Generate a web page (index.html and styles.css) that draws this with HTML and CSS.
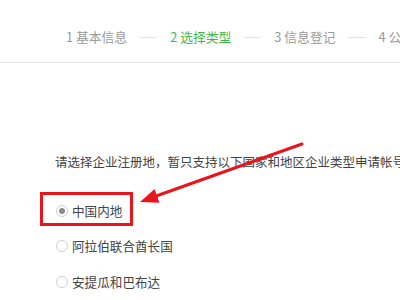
FILE: index.html
```html
<!DOCTYPE html>
<html lang="zh">
<head>
<meta charset="utf-8">
<link rel="stylesheet" href="styles.css">
</head>
<body>
<div class="page">
  <header class="header">
    <div class="steps">
      <span class="step">1 基本信息</span>
      <span class="dash"></span>
      <span class="step active">2 选择类型</span>
      <span class="dash"></span>
      <span class="step">3 信息登记</span>
      <span class="dash"></span>
      <span class="step">4 公众号信息</span>
    </div>
  </header>
  <main class="main">
    <p class="tip">请选择企业注册地，暂只支持以下国家和地区企业类型申请帐号</p>
    <ul class="options">
      <li class="option"><span class="radio checked"></span><span class="label">中国内地</span></li>
      <li class="option"><span class="radio"></span><span class="label">阿拉伯联合酋长国</span></li>
      <li class="option"><span class="radio"></span><span class="label">安提瓜和巴布达</span></li>
    </ul>
  </main>
  <div class="highlight"></div>
  <svg class="arrow" width="400" height="300" viewBox="0 0 400 300">
    <line x1="302" y1="144" x2="152" y2="197.5" stroke="#e8161c" stroke-width="3" stroke-linecap="round"/>
    <polygon points="140,202 159.4,202.8 154.6,189" fill="#e8161c"/>
  </svg>
</div>
</body>
</html>
```

FILE: styles.css
```css
html, body {
  margin: 0;
  padding: 0;
  background: #fff;
}
body {
  font-family: "Noto Sans CJK SC", "Microsoft YaHei", sans-serif;
  width: 400px;
  height: 300px;
  overflow: hidden;
}
.page {
  position: relative;
  width: 400px;
  height: 300px;
  overflow: hidden;
}
.header {
  height: 50px;
  padding-top: 12px;
  border-bottom: 1px solid #e6e6e6;
  box-sizing: content-box;
}
.steps {
  height: 50px;
  display: flex;
  align-items: center;
  padding-left: 66px;
  white-space: nowrap;
}
.step {
  font-size: 12.8px;
  color: #9a9a9a;
  line-height: 20px;
  flex: none;
}
.step.active {
  color: #44b549;
}
.dash {
  flex: none;
  width: 18px;
  height: 1px;
  background: #e2e2e2;
  margin: 1px 13px 0 12px;
}
.main {
  padding-left: 55px;
}
.tip {
  margin: 89px 0 0 0;
  font-size: 12.5px;
  line-height: 20px;
  color: #444;
  white-space: nowrap;
}
.options {
  list-style: none;
  margin: 21px 0 0 0;
  padding: 0;
}
.option {
  height: 35.5px;
  display: flex;
  align-items: center;
}
.radio {
  flex: none;
  width: 12px;
  height: 12px;
  box-sizing: border-box;
  border: 1px solid #cfcfcf;
  border-radius: 50%;
  margin-left: 1px;
  margin-right: 4px;
  position: relative;
  background: #fff;
}
.radio.checked::after {
  content: "";
  position: absolute;
  left: 2px;
  top: 2px;
  width: 6px;
  height: 6px;
  border-radius: 50%;
  background: #8c8c8c;
}
.label {
  font-size: 12.6px;
  color: #444;
  line-height: 20px;
}
.highlight {
  position: absolute;
  left: 40px;
  top: 192px;
  width: 93px;
  height: 34px;
  box-sizing: border-box;
  border: 3px solid #e8161c;
}
.arrow {
  position: absolute;
  left: 0;
  top: 0;
}
```
